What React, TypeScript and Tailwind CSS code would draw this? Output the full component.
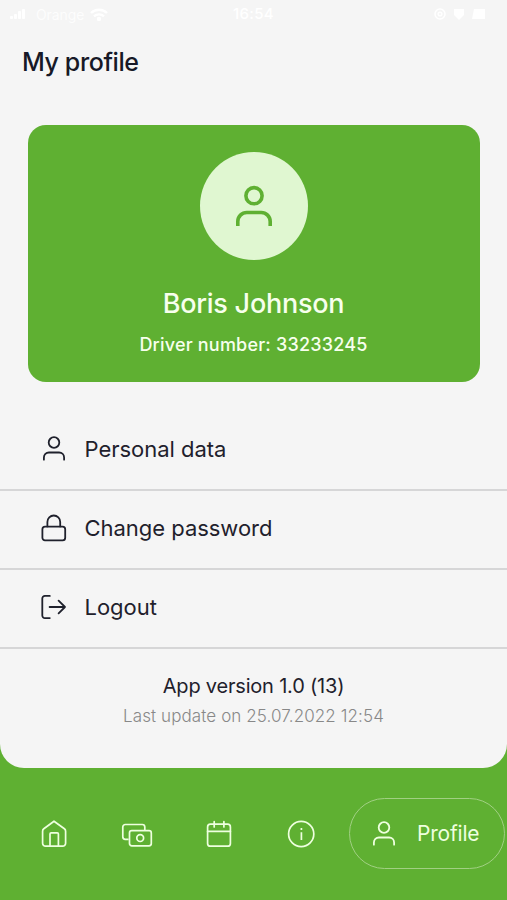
import type { ReactNode } from "react";

type IconProps = {
  className?: string;
};

function PersonIcon({ className }: IconProps) {
  return (
    <svg viewBox="0 0 28 28" className={className} fill="none" stroke="currentColor" strokeWidth="1.8" strokeLinecap="round">
      <circle cx="14" cy="7.5" r="5.3" />
      <path d="M3.9 24.7V22.5a5 5 0 0 1 5-5h10.2a5 5 0 0 1 5 5v2.2" />
    </svg>
  );
}

function LockIcon({ className }: IconProps) {
  return (
    <svg viewBox="0 0 28 30" className={className} fill="none" stroke="currentColor" strokeWidth="1.8" strokeLinecap="round">
      <rect x="2.4" y="13.6" width="22.8" height="13.8" rx="2.6" />
      <path d="M7.4 13.4V8.9a6.4 6.4 0 0 1 12.8 0v4.5" />
    </svg>
  );
}

function LogoutIcon({ className }: IconProps) {
  return (
    <svg viewBox="0 0 28 28" className={className} fill="none" stroke="currentColor" strokeWidth="1.8" strokeLinecap="round" strokeLinejoin="round">
      <path d="M9.8 2.9H4.9a2.6 2.6 0 0 0-2.6 2.6v17a2.6 2.6 0 0 0 2.6 2.6h4.9" />
      <path d="M9.6 14H25M18.6 7.7l6.4 6.3-6.4 6.3" />
    </svg>
  );
}

function HomeIcon() {
  return (
    <svg viewBox="0 0 30 30" className="h-[30px] w-[30px]" fill="none" stroke="currentColor" strokeWidth="1.7" strokeLinejoin="round">
      <path d="M3.6 12.2a3 3 0 0 1 1.2-2.4L15 2.2l10.4 7.6a3 3 0 0 1 1.2 2.4v12a3 3 0 0 1-3 3h-17a3 3 0 0 1-3-3z" />
      <path d="M11 27V15a1.1 1.1 0 0 1 1.1-1.1h6.2a1.1 1.1 0 0 1 1.1 1.1v12" />
    </svg>
  );
}

function CashIcon() {
  return (
    <svg viewBox="0 0 32 28" className="h-7 w-8" fill="none" stroke="currentColor" strokeWidth="1.7">
      <path d="M7.6 19.3H4.3a2.5 2.5 0 0 1-2.5-2.5V7a2.5 2.5 0 0 1 2.5-2.5h17A2.5 2.5 0 0 1 23.8 7v3.2" />
      <rect x="8.5" y="10.6" width="21.8" height="15.2" rx="2.3" />
      <circle cx="19.2" cy="18.1" r="3.4" />
    </svg>
  );
}

function CalendarIcon() {
  return (
    <svg viewBox="0 0 28 30" className="h-[30px] w-7" fill="none" stroke="currentColor" strokeWidth="1.7" strokeLinecap="round">
      <rect x="2.6" y="5.2" width="22.8" height="22" rx="2.8" />
      <path d="M2.6 12.4h22.8M9.2 2.6v5.4M18.9 2.6v5.4" />
    </svg>
  );
}

function InfoIcon() {
  return (
    <svg viewBox="0 0 28 28" className="h-7 w-7" fill="none" stroke="currentColor" strokeWidth="1.7">
      <circle cx="14.2" cy="14" r="12.6" />
      <path d="M14.4 12.2v7.8M14.4 8v2" />
    </svg>
  );
}

function StatusBar() {
  return (
    <div className="flex h-7 items-center justify-between px-2.5 text-white">
      <div className="flex w-[200px] items-center gap-2.5">
        <svg viewBox="0 0 16 12" className="h-3 w-4" fill="currentColor">
          <rect x="0" y="8" width="3" height="3" rx="1" />
          <rect x="4" y="6" width="3" height="5" rx="1" />
          <rect x="8" y="3" width="3" height="8" rx="1" />
          <rect x="12" y="1" width="3" height="10" rx="1" />
        </svg>
        <span className="text-[14px] tracking-[-0.1px] opacity-80">Orange</span>
        <svg viewBox="0 0 18 13" className="-ml-1 h-[13px] w-[18px]" fill="none" stroke="currentColor" strokeWidth="2.4">
          <path d="M1 5a11.5 11.5 0 0 1 16 0M4 8.4a7.2 7.2 0 0 1 10 0" />
          <circle cx="9" cy="11" r="1" />
        </svg>
      </div>
      <span className="text-[15px] font-medium tracking-[0.3px]">16:54</span>
      <div className="flex w-[200px] items-center justify-end gap-[7px] pr-3">
        <svg viewBox="0 0 12 12" className="h-3 w-3" fill="none" stroke="currentColor" strokeWidth="1.5">
          <circle cx="6" cy="6" r="5" />
          <circle cx="6" cy="6" r="1.8" />
        </svg>
        <svg viewBox="0 0 12 12" className="h-3 w-3" fill="currentColor">
          <path d="M1 1h10v6l-5 5-5-5z" />
        </svg>
        <svg viewBox="0 0 13 12" className="h-3 w-[13px]" fill="currentColor">
          <path d="M2 1h11v10H0z" />
        </svg>
      </div>
    </div>
  );
}

function MenuRow({ icon, label }: { icon: ReactNode; label: string }) {
  return (
    <button type="button" className="flex h-[78.7px] w-full items-center border-b-2 border-[#d6d6d7] pb-[3px] pl-[39.5px] text-left">
      <span className="flex w-7 justify-center">{icon}</span>
      <span className="ml-[17px] text-[22px] leading-7 tracking-[-0.03px]">{label}</span>
    </button>
  );
}

export default function App() {
  return (
    <div className="flex h-[900px] w-[507px] flex-col overflow-hidden bg-[#5fb032] font-['Inter',sans-serif] text-[#1f212c]">
      <main className="h-[767.5px] shrink-0 rounded-b-[24px] bg-[#f5f5f5]">
        <StatusBar />
        <h1 className="ml-[22px] mt-[18px] text-[25px] font-medium leading-8 tracking-[-0.4px] text-[#171927]">My profile</h1>

        <section className="mx-auto mt-[47px] flex h-[257px] w-[452px] flex-col items-center rounded-[18px] bg-[#5fb032] pt-[27px] text-[#f7ffed]">
          <div className="flex h-[108px] w-[108px] items-center justify-center rounded-full bg-[#e0f7d1]">
            <svg viewBox="0 0 40 44" className="h-11 w-10 text-[#5fb032]" fill="none" stroke="currentColor" strokeWidth="3.6">
              <circle cx="20" cy="11.7" r="8.1" />
              <path d="M3.8 42v-4.5a9 9 0 0 1 9-9h14.4a9 9 0 0 1 9 9V42" />
            </svg>
          </div>
          <p className="mt-[26px] text-[27px] font-medium leading-9 tracking-[-0.25px]">Boris Johnson</p>
          <p className="mt-[11px] text-[18px] font-medium leading-6 tracking-[0.2px]">Driver number: 33233245</p>
        </section>

        <nav className="mt-[30.5px]">
          <MenuRow icon={<PersonIcon className="h-7 w-7" />} label="Personal data" />
          <MenuRow icon={<LockIcon className="h-[30px] w-7" />} label="Change password" />
          <MenuRow icon={<LogoutIcon className="h-7 w-7" />} label="Logout" />
        </nav>

        <div className="mt-[23.5px] text-center">
          <p className="text-[20px] leading-7 tracking-[-0.2px]">App version 1.0 (13)</p>
          <p className="mt-[4px] text-[17px] font-light leading-6 tracking-[0.1px] text-[#888888]">Last update on 25.07.2022 12:54</p>
        </div>
      </main>

      <footer className="flex h-[132.5px] items-center pl-[39px] text-[#eeffdf]">
        <div className="flex w-[310px] items-center">
          <div className="w-[82px]"><HomeIcon /></div>
          <div className="w-[84px]"><CashIcon /></div>
          <div className="w-[82px]"><CalendarIcon /></div>
          <InfoIcon />
        </div>
        <button type="button" className="-mt-px flex h-[71px] w-[156px] shrink-0 items-center rounded-full border border-[#a1d083] pl-[20px]">
          <PersonIcon className="mt-px h-7 w-7" />
          <span className="ml-[19px] pt-[2px] text-[21px] leading-7 tracking-[-0.2px]">Profile</span>
        </button>
      </footer>
    </div>
  );
}
